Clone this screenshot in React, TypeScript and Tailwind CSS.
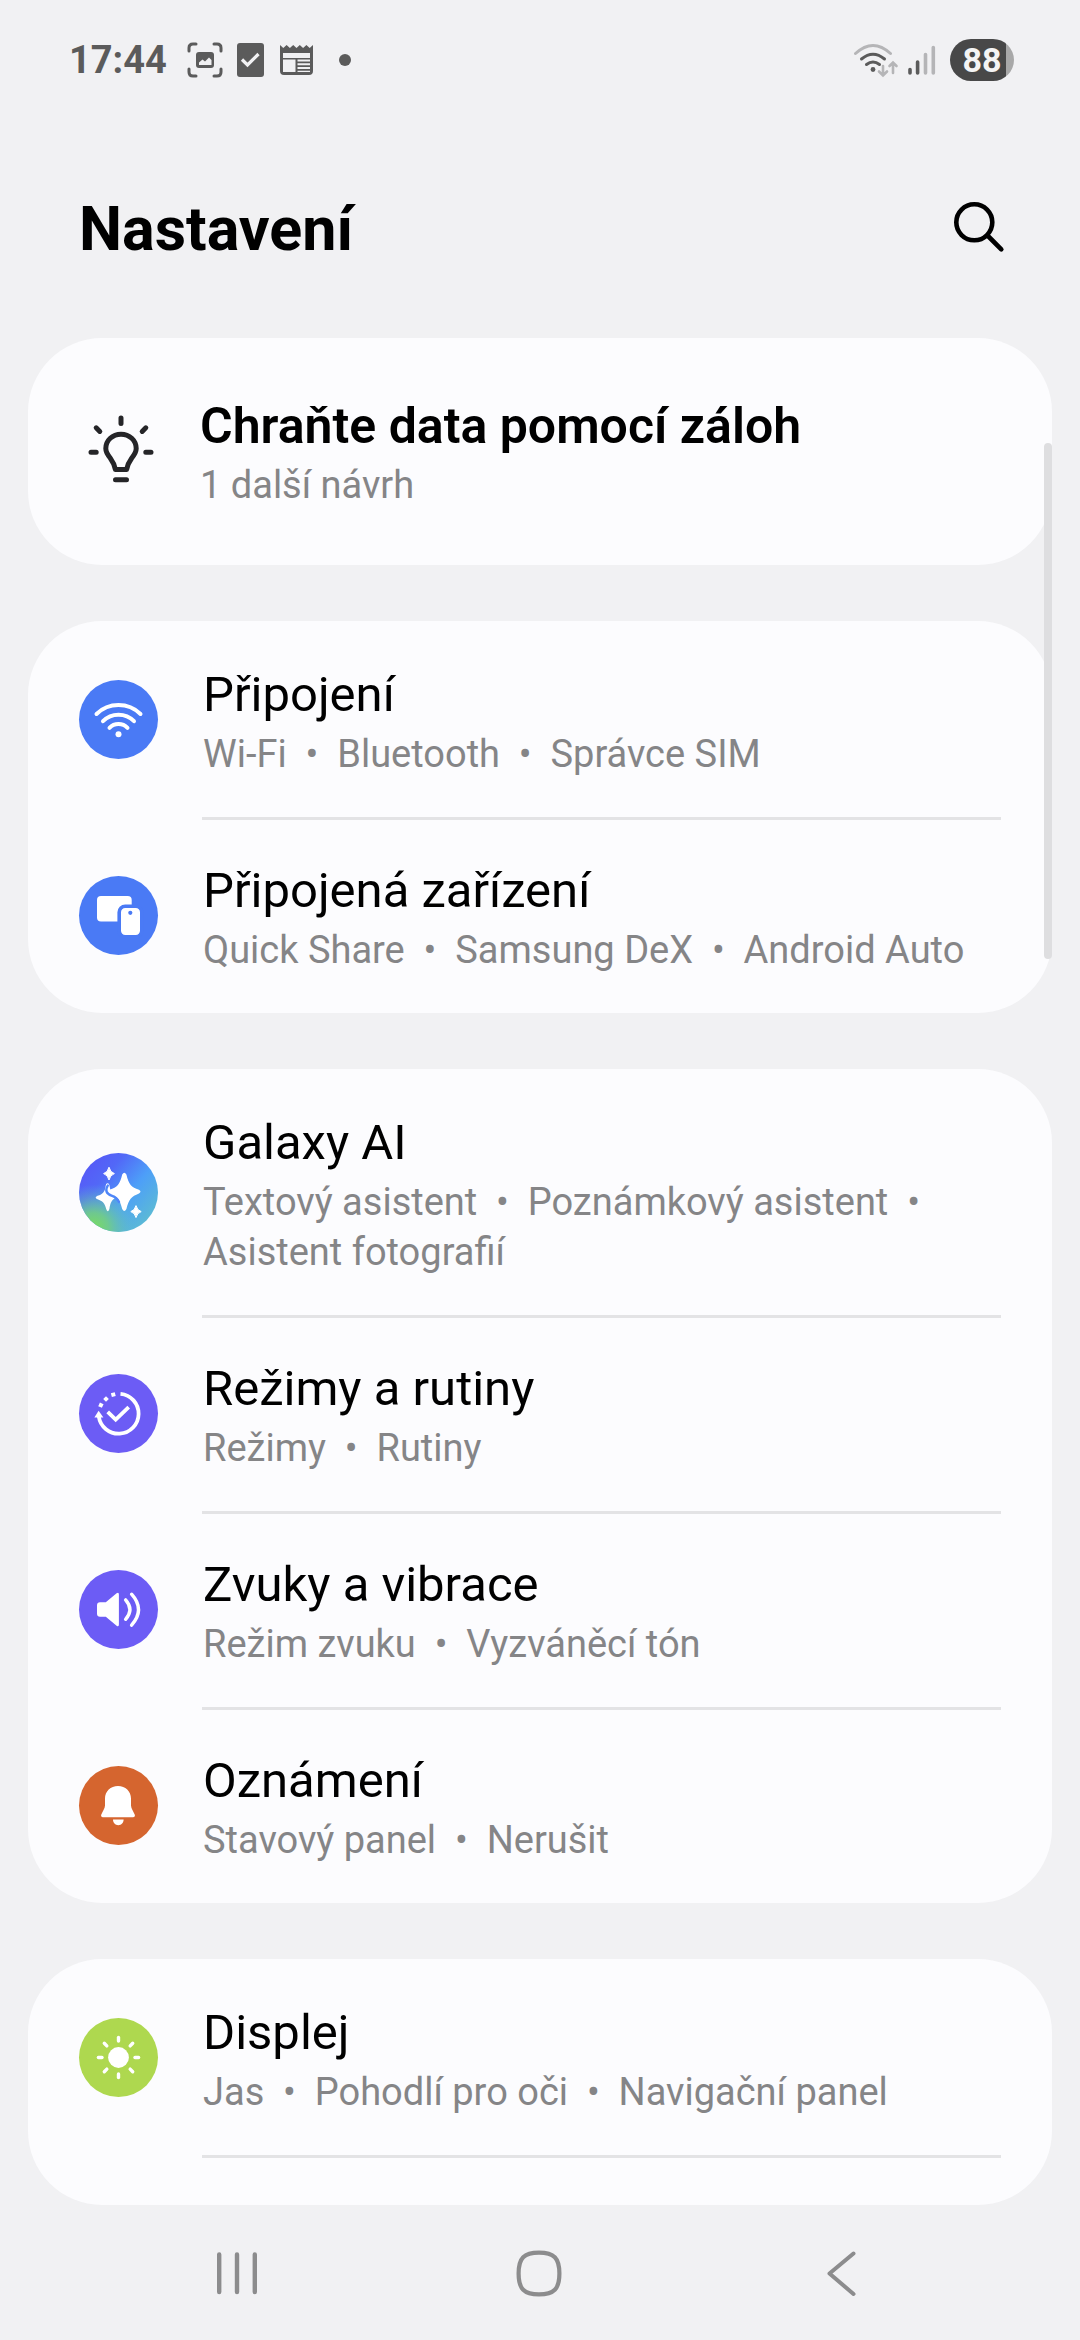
import type { ReactNode } from 'react';

type Item = {
  title: string;
  details: string[];
  icon: ReactNode;
};

const IconCircle = ({ className, children }: { className?: string; children: ReactNode }) => (
  <svg viewBox="0 0 79 79" className={`size-[79px] shrink-0 rounded-full ${className ?? ''}`} fill="none" aria-hidden="true">
    {children}
  </svg>
);

const ConnectionsIcon = () => (
  <IconCircle className="bg-[#4a7af5]">
    <g stroke="#fff" strokeWidth="4" strokeLinecap="round">
      <path d="M17.5 34A31.5 31.5 0 0 1 61.5 34" />
      <path d="M24 41.2A21.6 21.6 0 0 1 55 41.2" />
      <path d="M30.5 47.8A12.4 12.4 0 0 1 48.5 47.8" />
    </g>
    <circle cx="39.5" cy="54.3" r="3" fill="#fff" />
  </IconCircle>
);

const DevicesIcon = () => (
  <IconCircle className="bg-[#4a7af5]">
    <rect x="18" y="20" width="34.7" height="25.5" rx="4" fill="#fff" />
    <rect x="40.2" y="30.2" width="22.6" height="30.6" rx="6" fill="#fff" stroke="#4a7af5" strokeWidth="3.6" />
    <circle cx="51.3" cy="36.8" r="2.1" fill="#4a7af5" />
  </IconCircle>
);

const GalaxyAiIcon = () => (
  <IconCircle>
    <defs>
      <linearGradient id="ai-base" x1="0.1" y1="0.15" x2="0.9" y2="0.85">
        <stop offset="0" stopColor="#565af7" />
        <stop offset="0.25" stopColor="#5268f7" />
        <stop offset="0.6" stopColor="#4d9ff8" />
        <stop offset="1" stopColor="#5cbbd4" />
      </linearGradient>
      <radialGradient id="ai-glow" cx="0.18" cy="0.95" r="0.55">
        <stop offset="0" stopColor="#7bdd5c" />
        <stop offset="0.35" stopColor="#72cf84" stopOpacity="0.9" />
        <stop offset="1" stopColor="#5cbbd4" stopOpacity="0" />
      </radialGradient>
    </defs>
    <rect width="79" height="79" fill="url(#ai-base)" />
    <rect width="79" height="79" fill="url(#ai-glow)" />
    <path
      d="M28.6 30.2C30 30.5 30.3 31.5 30.6 33C31.4 38 32.5 41 37 44.5C33 46.5 31.5 49 30.4 56Q28.8 60.5 27.2 56C25.8 50 23.5 48 18.5 46.3Q14.8 44.6 18.5 42.8C24 41 25.8 39 26.6 33.2C26.9 31.4 27.4 30.3 28.6 30.2Z"
      fill="#fff"
    />
    <path
      d="M43.2 21.5Q45.3 17.8 47.4 21.5C49.8 31.5 52.2 34.2 60 36.8Q63 38.6 60 40.4C52.2 43.4 49.8 46.2 47.4 56Q45.3 60 43.2 56C40.8 46.2 38.4 43.4 30.6 40.4Q27.6 38.6 30.6 36.8C38.4 34.2 40.8 31.5 43.2 21.5Z"
      fill="#fff"
    />
    <path
      d="M28.8 32.5C25.8 37.5 27.5 40.8 32.5 42.6C37 44.2 38.5 45.5 40 49"
      stroke="#4f86f8"
      strokeWidth="2.4"
      strokeLinecap="round"
    />
    <path d="M30 14.2Q31.2 19.4 35.4 20.6Q31.2 21.8 30 27Q28.8 21.8 24.6 20.6Q28.8 19.4 30 14.2Z" fill="#fff" stroke="#fff" />
    <path d="M57 52.6Q58.2 57.4 62.2 58.6Q58.2 59.8 57 64.6Q55.8 59.8 51.8 58.6Q55.8 57.4 57 52.6Z" fill="#fff" stroke="#fff" />
  </IconCircle>
);

const RoutinesIcon = () => (
  <IconCircle className="bg-[#6c5cf5]">
    <g stroke="#fff" strokeWidth="3.8">
      <path d="M41.5 19.8A20 20 0 1 1 19.8 42.5" />
      <path d="M28.7 37.8L36.7 45.6L49.7 33.2" />
    </g>
    <path d="M19.6 36.8L24.4 43.4H15.4Z" fill="#fff" />
    <g fill="#fff">
      <rect x="-2" y="-2" width="4" height="4" transform="translate(21.9 31.2) rotate(25)" />
      <rect x="-2" y="-2" width="4" height="4" transform="translate(27 25) rotate(45)" />
      <rect x="-2" y="-2" width="4" height="4" transform="translate(34.3 20.6) rotate(75)" />
    </g>
  </IconCircle>
);

const SoundIcon = () => (
  <IconCircle className="bg-[#6c5cf5]">
    <path
      d="M18 35.3Q18 32.3 21 32.3H26.8L37.6 23.3Q39.9 21.8 39.9 24.4V54.6Q39.9 57.2 37.6 55.7L26.8 46.7H21Q18 46.7 18 43.7Z"
      fill="#fff"
    />
    <g stroke="#fff" strokeWidth="3.4" strokeLinecap="round">
      <path d="M46.6 29.9Q55.2 39.5 46.6 49.3" />
      <path d="M52.6 24.2Q66.4 39.6 52.6 55.2" />
    </g>
  </IconCircle>
);

const BellIcon = () => (
  <IconCircle className="bg-[#d5652f]">
    <path
      d="M39 20C46.4 20 52 25.4 52 32.6V39.4C52 42.4 54.6 45.4 55.8 48.8Q56.4 51.2 54 51.2H24Q21.6 51.2 22.2 48.8C23.4 45.4 26 42.4 26 39.4V32.6C26 25.4 31.6 20 39 20Z"
      fill="#fff"
    />
    <path d="M34 53.6H44.6C44.6 57 42.4 59.2 39.3 59.2C36.2 59.2 34 57 34 53.6Z" fill="#fff" />
  </IconCircle>
);

const SunIcon = () => (
  <IconCircle className="bg-[#aed84f]">
    <circle cx="39.5" cy="39.5" r="10.4" fill="#fff" />
    <g stroke="#fff" strokeWidth="3.4" strokeLinecap="round">
      {[0, 45, 90, 135, 180, 225, 270, 315].map((angle) => (
        <path key={angle} d="M39.5 19.4V23" transform={`rotate(${angle} 39.5 39.5)`} />
      ))}
    </g>
  </IconCircle>
);

const BulbIcon = () => (
  <svg viewBox="0 0 79 79" className="size-[79px] shrink-0" fill="none" stroke="#252528" strokeWidth="5" strokeLinecap="round" aria-hidden="true">
    <path d="M42 6V11.5M17.2 15.8L20.8 19.4M66.8 15.8L63.2 19.4M12 40.3H17.2M66.8 40.3H72M36.5 67.8H47.5" />
    <path
      strokeLinejoin="round"
      d="M36.4 57.5H47.6C48.6 51.5 50.6 49 52.8 46C55.6 42.6 57.2 40 57.2 36.6C57.2 28.3 50.4 22.2 42 22.2C33.6 22.2 26.8 28.3 26.8 36.6C26.8 40 28.4 42.6 31.2 46C33.4 49 35.4 51.5 36.4 57.5Z"
    />
  </svg>
);

const groups: Item[][] = [
  [
    { title: 'Připojení', details: ['Wi-Fi', 'Bluetooth', 'Správce SIM'], icon: <ConnectionsIcon /> },
    { title: 'Připojená zařízení', details: ['Quick Share', 'Samsung DeX', 'Android Auto'], icon: <DevicesIcon /> },
  ],
  [
    { title: 'Galaxy AI', details: ['Textový asistent', 'Poznámkový asistent', 'Asistent fotografií'], icon: <GalaxyAiIcon /> },
    { title: 'Režimy a rutiny', details: ['Režimy', 'Rutiny'], icon: <RoutinesIcon /> },
    { title: 'Zvuky a vibrace', details: ['Režim zvuku', 'Vyzváněcí tón'], icon: <SoundIcon /> },
    { title: 'Oznámení', details: ['Stavový panel', 'Nerušit'], icon: <BellIcon /> },
  ],
];

const SettingsRow = ({ title, details, icon }: Item) => (
  <a href="#" className="flex items-center gap-[45px] px-[51px]">
    {icon}
    <span className="flex-1 pb-[38px] pt-10">
      <span className="block text-[49px] leading-[68px] text-black">{title}</span>
      <span className="block whitespace-pre-wrap text-[38px] leading-[50px] text-[#858587]">{details.join('  •  ')}</span>
    </span>
  </a>
);

// The divider starts at the text column and takes no height of its own.
const Divider = () => <div className="-mb-[3px] ml-[174px] mr-[51px] h-[3px] shrink-0 bg-[#e3e3e5]" />;

const StatusBar = () => (
  <div className="flex h-[120px] shrink-0 items-center justify-between pl-[69px] pr-[66px] text-[#5b5b5b]">
    <div className="flex items-center">
      <span className="text-[38px] font-bold leading-none">17:44</span>
      <svg viewBox="0 0 36 36" className="ml-5 size-9" fill="none" aria-hidden="true">
        <g stroke="currentColor" strokeWidth="3" strokeLinecap="round">
          <path d="M2 9V6Q2 2 6 2H9M27 2H30Q34 2 34 6V9M34 27V30Q34 34 30 34H27M9 34H6Q2 34 2 30V27" />
        </g>
        <rect x="9" y="10" width="18" height="16" rx="3" fill="currentColor" />
        <path d="M12 23V20.5L15.5 17.5L18 19.5L22 15.5L24.5 18V23Z" fill="#f1f1f3" />
      </svg>
      <svg viewBox="0 0 27 34" className="ml-[14px] h-[34px] w-[27px]" fill="none" aria-hidden="true">
        <rect width="27" height="34" rx="3" fill="currentColor" />
        <path d="M5 16.5L10.5 22L21.5 11" stroke="#f1f1f3" strokeWidth="3.2" />
      </svg>
      <svg viewBox="0 0 33 30" className="ml-4 h-[30px] w-[33px]" fill="none" aria-hidden="true">
        <path
          fillRule="evenodd"
          fill="currentColor"
          d="M0 0L3.3 3L6.6 0L9.9 3L13.2 0L16.5 3L19.8 0L23.1 3L26.4 0L29.7 3L33 0V26Q33 30 29 30H4Q0 30 0 26ZM3 8V13H30V8ZM3 14.5V27H15.5V14.5ZM17.5 14.5V16.5H30V14.5ZM17.5 18.3V20.3H30V18.3ZM17.5 22V24H30V22ZM17.5 25.7V27H30V25.7Z"
        />
      </svg>
      <span className="ml-[26px] size-3 rounded-full bg-[#5b5b5b]" />
    </div>
    <div className="flex items-center">
      <svg viewBox="0 0 46 36" className="h-9 w-[46px]" fill="none" strokeWidth="3" strokeLinecap="round" aria-hidden="true">
        <path d="M2.5 11.5Q20 -4.5 37.5 11.5" stroke="#b5b5b7" />
        <path d="M8.5 17Q20 7.5 31.5 17M13.5 22.5Q20 17.5 26.5 22.5" stroke="currentColor" />
        <circle cx="20" cy="27.5" r="2.4" fill="currentColor" />
        <path d="M30 24V33M26 29.5L30 33.5L34 29.5M40 31V20.5M36.5 24L40 20.5L43.5 24" stroke="#b5b5b7" strokeWidth="2.6" />
      </svg>
      <svg viewBox="0 0 28 30" className="ml-[9px] h-[30px] w-7" fill="none" strokeWidth="3.6" strokeLinecap="round" aria-hidden="true">
        <path d="M2 24.5V28M9.6 17V28" stroke="currentColor" />
        <path d="M17.5 9.5V28M25.3 2.5V28" stroke="#b5b5b7" />
      </svg>
      <span className="ml-[14px] flex h-[42px] w-16 items-center justify-center rounded-full bg-linear-to-r from-[#484848] from-87% to-[#a8a8a8] to-87% text-[34px] font-bold leading-none text-[#f4f4f4]">
        88
      </span>
    </div>
  </div>
);

const NavBar = () => (
  <nav className="grid h-[135px] shrink-0 grid-cols-3 pl-[86px] pr-[88px] text-[#8c8c8d]">
    <button type="button" aria-label="Poslední aplikace" className="flex items-center justify-center">
      <svg viewBox="0 0 48 48" className="size-12" stroke="currentColor" strokeWidth="4.4" strokeLinecap="round">
        <path d="M6.2 5.5V43M24 5.5V43M41.8 5.5V43" />
      </svg>
    </button>
    <button type="button" aria-label="Domů" className="flex items-center justify-center">
      <svg viewBox="0 0 48 48" className="size-12" fill="none" stroke="currentColor" strokeWidth="4.2">
        <path d="M24 3.6C39 3.6 44.4 9 44.4 24.5S39 45.4 24 45.4S3.6 40 3.6 24.5S9 3.6 24 3.6Z" />
      </svg>
    </button>
    <button type="button" aria-label="Zpět" className="flex items-center justify-center">
      <svg viewBox="0 0 48 48" className="size-12" fill="none" stroke="currentColor" strokeWidth="4" strokeLinecap="round" strokeLinejoin="round">
        <path d="M36.5 4.5L12.5 24.5L36.5 45" />
      </svg>
    </button>
  </nav>
);

const App = () => {
  return (
    <div className="flex h-screen flex-col bg-[#f1f1f3] font-['Roboto',sans-serif]">
      <StatusBar />
      <header className="flex h-[218px] shrink-0 items-center justify-between pl-[79px] pr-[69px]">
        <h1 className="text-[61px] font-bold leading-none text-black">Nastavení</h1>
        <button type="button" aria-label="Hledat" className="flex items-center">
          <svg viewBox="0 0 60 60" className="size-[60px]" fill="none" stroke="#000" strokeWidth="4.6" strokeLinecap="round">
            <circle cx="23.3" cy="23.3" r="18" />
            <path d="M36.5 36.5L50.3 50.3" />
          </svg>
        </button>
      </header>

      <main className="relative flex min-h-0 flex-1 flex-col gap-14 overflow-hidden px-7">
        <a href="#" className="flex shrink-0 items-center gap-[42px] rounded-[74px] bg-[#fcfcfe] px-[51px]">
          <BulbIcon />
          <span className="flex-1 pb-[55px] pt-[54px]">
            <span className="block text-[50px] font-semibold leading-[68px] text-black">Chraňte data pomocí záloh</span>
            <span className="block text-[38px] leading-[50px] text-[#858587]">1 další návrh</span>
          </span>
        </a>

        {groups.map((items) => (
          <section key={items[0].title} className="flex shrink-0 flex-col rounded-[74px] bg-[#fcfcfe]">
            {items.map((item, index) => (
              <div key={item.title} className="flex flex-col">
                {index > 0 && <Divider />}
                <SettingsRow {...item} />
              </div>
            ))}
          </section>
        ))}

        <section className="flex min-h-0 flex-1 flex-col overflow-hidden rounded-[74px] bg-[#fcfcfe]">
          <SettingsRow title="Displej" details={['Jas', 'Pohodlí pro oči', 'Navigační panel']} icon={<SunIcon />} />
          <Divider />
        </section>

        <div className="absolute right-7 top-[105px] h-[516px] w-2 rounded-full bg-[#dedee0]" />
      </main>

      <NavBar />
    </div>
  );
};

export default App;
